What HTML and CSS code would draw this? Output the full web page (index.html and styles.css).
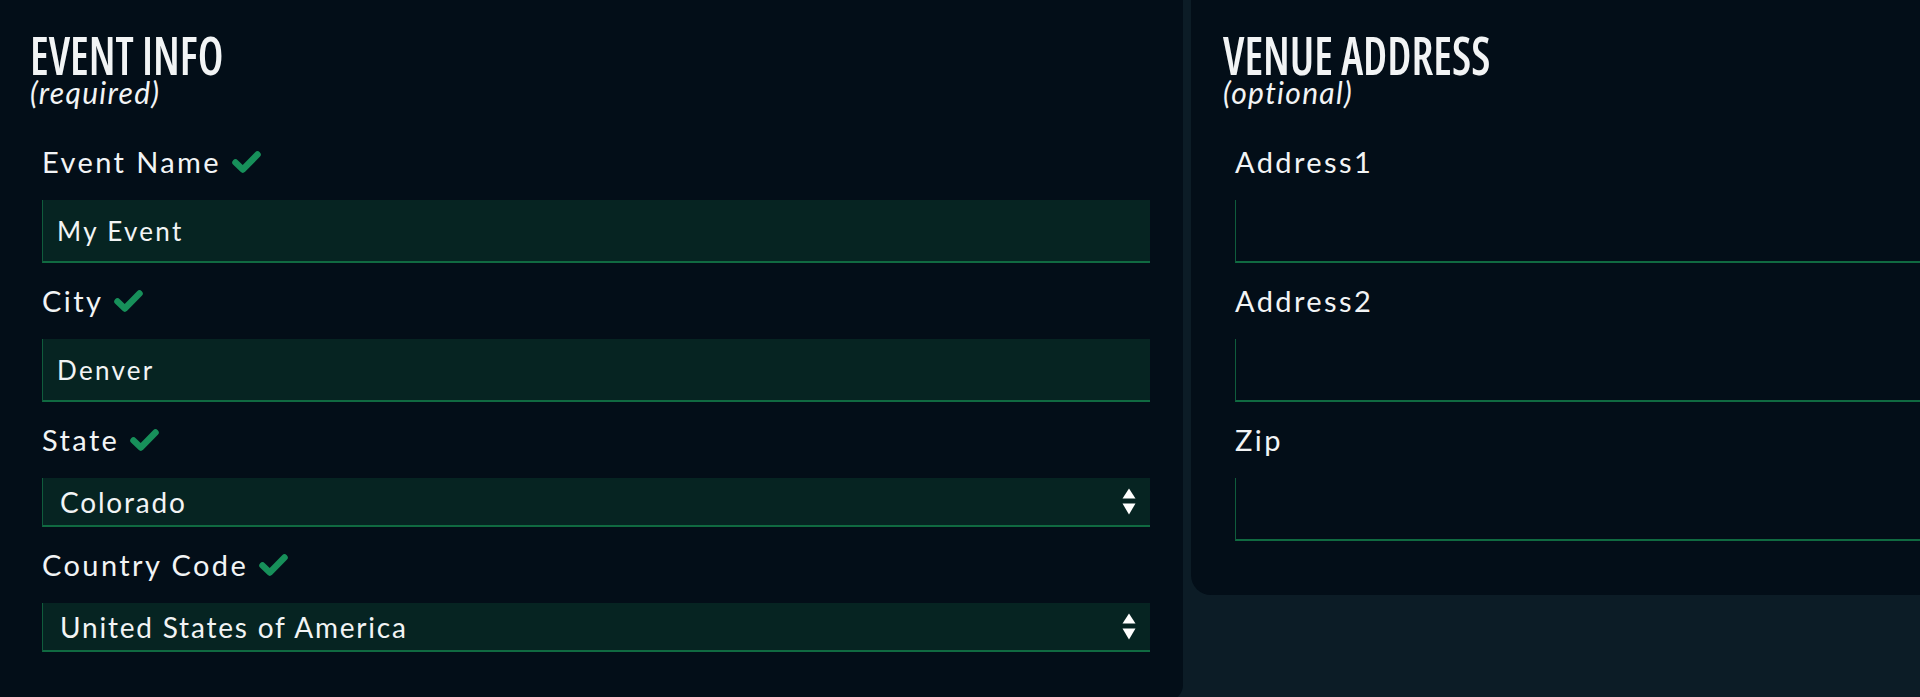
FILE: index.html
```html
<!DOCTYPE html>
<html lang="en">
<head>
<meta charset="utf-8">
<title>Event details</title>
<link rel="stylesheet" href="styles.css">
</head>
<body>
<main class="layout">
  <section class="panel panel-main">
    <header class="panel-head">
      <h2 class="panel-title"><span>EVENT INFO</span></h2>
      <p class="panel-sub">(required)</p>
    </header>
    <div class="fields">
      <div class="field">
        <label class="field-label">Event Name
          <svg class="check" viewBox="0 0 31 24" width="31" height="24"><path d="M4.5 12.5 L11.8 19.5 L26.5 4.5" fill="none" stroke="currentColor" stroke-width="6.5" stroke-linecap="round" stroke-linejoin="round"/></svg>
        </label>
        <input class="text-input filled" type="text" value="My Event">
      </div>
      <div class="field">
        <label class="field-label">City
          <svg class="check" viewBox="0 0 31 24" width="31" height="24"><path d="M4.5 12.5 L11.8 19.5 L26.5 4.5" fill="none" stroke="currentColor" stroke-width="6.5" stroke-linecap="round" stroke-linejoin="round"/></svg>
        </label>
        <input class="text-input filled" type="text" value="Denver">
      </div>
      <div class="field">
        <label class="field-label">State
          <svg class="check" viewBox="0 0 31 24" width="31" height="24"><path d="M4.5 12.5 L11.8 19.5 L26.5 4.5" fill="none" stroke="currentColor" stroke-width="6.5" stroke-linecap="round" stroke-linejoin="round"/></svg>
        </label>
        <div class="select">
          <span>Colorado</span>
          <svg class="arrows" viewBox="0 0 14 27" width="14" height="27"><polygon points="0.5,10.5 7,0.5 13.5,10.5" fill="currentColor"/><polygon points="0.5,15.5 13.5,15.5 7,26.5" fill="currentColor"/></svg>
        </div>
      </div>
      <div class="field">
        <label class="field-label">Country Code
          <svg class="check" viewBox="0 0 31 24" width="31" height="24"><path d="M4.5 12.5 L11.8 19.5 L26.5 4.5" fill="none" stroke="currentColor" stroke-width="6.5" stroke-linecap="round" stroke-linejoin="round"/></svg>
        </label>
        <div class="select">
          <span>United States of America</span>
          <svg class="arrows" viewBox="0 0 14 27" width="14" height="27"><polygon points="0.5,10.5 7,0.5 13.5,10.5" fill="currentColor"/><polygon points="0.5,15.5 13.5,15.5 7,26.5" fill="currentColor"/></svg>
        </div>
      </div>
    </div>
  </section>

  <section class="panel panel-side">
    <header class="panel-head">
      <h2 class="panel-title"><span>VENUE ADDRESS</span></h2>
      <p class="panel-sub">(optional)</p>
    </header>
    <div class="fields">
      <div class="field">
        <label class="field-label">Address1</label>
        <input class="text-input" type="text" value="">
      </div>
      <div class="field">
        <label class="field-label">Address2</label>
        <input class="text-input" type="text" value="">
      </div>
      <div class="field">
        <label class="field-label">Zip</label>
        <input class="text-input" type="text" value="">
      </div>
    </div>
  </section>
</main>
</body>
</html>
```

FILE: styles.css
```css
html, body {
  margin: 0;
  height: 100%;
  overflow: hidden;
}

body {
  background: #0c1c26;
  color: #f2f4f5;
  font-family: Lato, "Noto Sans", sans-serif;
}

.layout {
  display: flex;
  align-items: flex-start;
  gap: 8px;
  width: 2400px;
}

.panel {
  flex-shrink: 0;
  box-sizing: border-box;
  background: #030e18;
}

.panel-main {
  width: 1183px;
  height: 701px;
  padding: 30px 33px 0 30px;
  border-bottom-right-radius: 16px;
}

.panel-side {
  width: 1183px;
  height: 595px;
  padding: 30px 0 0 32px;
  border-bottom-left-radius: 20px;
}

.panel-title {
  margin: 0;
  font-family: "Open Sans", "Liberation Sans", sans-serif;
  font-stretch: 75%;
  font-weight: 600;
  font-size: 52.5px;
  line-height: 49px;
  white-space: nowrap;
}

.panel-title span {
  display: inline-block;
  transform: scaleX(0.861);
  transform-origin: 0 50%;
}

.panel-sub {
  margin: 4px 0 0;
  font-style: italic;
  font-weight: 400;
  font-size: 30px;
  line-height: 18px;
  letter-spacing: 1.3px;
}

.fields {
  display: flex;
  flex-direction: column;
  gap: 20px;
  margin-top: 43px;
  padding-left: 12px;
}

.field {
  display: flex;
  flex-direction: column;
  gap: 20px;
}

.field-label {
  display: flex;
  align-items: center;
  gap: 10px;
  font-size: 29px;
  line-height: 36px;
  letter-spacing: 2.4px;
}

.check {
  color: #17905a;
  flex-shrink: 0;
}

.text-input {
  display: block;
  box-sizing: border-box;
  width: 1108px;
  height: 63px;
  margin: 0;
  padding: 0 14px;
  border: 0;
  border-left: 1px solid #0f5c3c;
  border-bottom: 2px solid #106a41;
  background: transparent;
  color: #f2f4f5;
  font-family: Lato, "Noto Sans", sans-serif;
  font-size: 26px;
  letter-spacing: 2.3px;
  outline: none;
}

.text-input.filled {
  background: #062422;
}

.select {
  display: flex;
  align-items: center;
  justify-content: space-between;
  box-sizing: border-box;
  width: 1108px;
  height: 49px;
  padding: 0 14px 0 17px;
  border-left: 1px solid #0f5c3c;
  border-bottom: 2px solid #106a41;
  background: #062422;
  font-size: 28px;
  letter-spacing: 1.8px;
}

.arrows {
  color: #ffffff;
  flex-shrink: 0;
}
```
